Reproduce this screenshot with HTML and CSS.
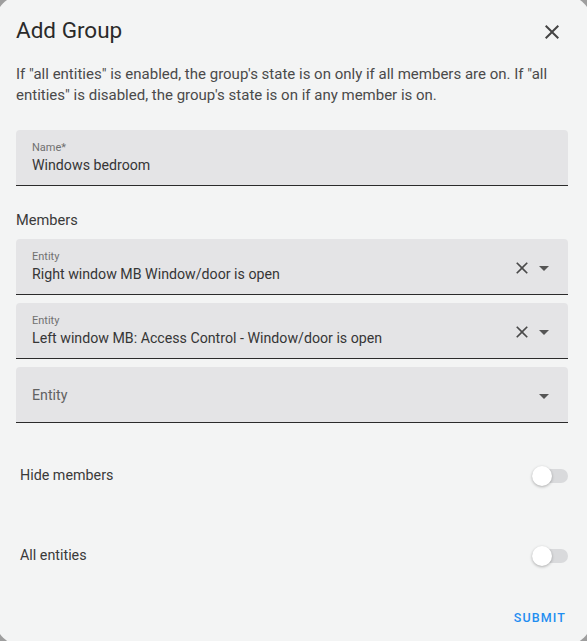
FILE: index.html
```html
<!DOCTYPE html>
<html lang="en">
<head>
    <meta charset="UTF-8">
    <meta name="viewport" content="width=device-width, initial-scale=1.0">
    <title>Add Group</title>
    <link rel="stylesheet" href="styles.css">
</head>
<body>
    <div class="dialog">
        <div class="dialog-header">
            <h2 class="dialog-title">Add Group</h2>
            <button class="icon-button close-button" aria-label="Close">
                <svg viewBox="0 0 24 24" width="24" height="24"><path d="M19 6.41L17.59 5 12 10.59 6.41 5 5 6.41 10.59 12 5 17.59 6.41 19 12 13.41 17.59 19 19 17.59 13.41 12z"/></svg>
            </button>
        </div>

        <div class="dialog-content">
            <p class="hint">If "all entities" is enabled, the group's state is on only if all members are on. If "all entities" is disabled, the group's state is on if any member is on.</p>

            <div class="field">
                <div class="field-text">
                    <div class="field-label">Name*</div>
                    <div class="field-value">Windows bedroom</div>
                </div>
            </div>

            <div class="section-label">Members</div>

            <div class="members">
                <div class="field">
                    <div class="field-text">
                        <div class="field-label">Entity</div>
                        <div class="field-value">Right window MB Window/door is open</div>
                    </div>
                    <div class="field-icons">
                        <svg class="clear-icon" viewBox="0 0 24 24" width="20" height="20"><path d="M19 6.41L17.59 5 12 10.59 6.41 5 5 6.41 10.59 12 5 17.59 6.41 19 12 13.41 17.59 19 19 17.59 13.41 12z"/></svg>
                        <svg class="caret-icon" viewBox="0 0 24 24" width="24" height="24"><path d="M7 10l5 5 5-5z"/></svg>
                    </div>
                </div>
                <div class="field">
                    <div class="field-text">
                        <div class="field-label">Entity</div>
                        <div class="field-value">Left window MB: Access Control - Window/door is open</div>
                    </div>
                    <div class="field-icons">
                        <svg class="clear-icon" viewBox="0 0 24 24" width="20" height="20"><path d="M19 6.41L17.59 5 12 10.59 6.41 5 5 6.41 10.59 12 5 17.59 6.41 19 12 13.41 17.59 19 19 17.59 13.41 12z"/></svg>
                        <svg class="caret-icon" viewBox="0 0 24 24" width="24" height="24"><path d="M7 10l5 5 5-5z"/></svg>
                    </div>
                </div>
                <div class="field field-empty">
                    <div class="field-text">
                        <div class="field-placeholder">Entity</div>
                    </div>
                    <div class="field-icons">
                        <svg class="caret-icon" viewBox="0 0 24 24" width="24" height="24"><path d="M7 10l5 5 5-5z"/></svg>
                    </div>
                </div>
            </div>

            <div class="toggle-row">
                <span class="toggle-label">Hide members</span>
                <span class="switch"><span class="switch-thumb"></span></span>
            </div>
            <div class="toggle-row">
                <span class="toggle-label">All entities</span>
                <span class="switch"><span class="switch-thumb"></span></span>
            </div>
        </div>

        <div class="dialog-actions">
            <button class="text-button">Submit</button>
        </div>
    </div>
</body>
</html>
```

FILE: styles.css
```css
body {
    font-family: Roboto, "Noto Sans", sans-serif;
    margin: 0;
    background-color: #9e9e9e;
    overflow: hidden;
    color: #212121;
}
.dialog {
    margin: -5px -5px 0 -5px;
    height: 651px;
    box-sizing: border-box;
    padding: 19px 24px 0 21px;
    background-color: #f3f4f4;
    border-radius: 28px;
    display: flex;
    flex-direction: column;
}
.dialog-header {
    display: flex;
    justify-content: space-between;
    align-items: flex-start;
}
.dialog-title {
    margin: 0;
    font-size: 22.5px;
    font-weight: 400;
    line-height: 32px;
    color: #2a2a2a;
}
.icon-button {
    border: none;
    background: none;
    padding: 0;
    cursor: pointer;
}
.close-button {
    width: 24px;
    height: 24px;
    margin-top: 6px;
    margin-right: 4px;
    fill: #444;
}
.close-button svg {
    display: block;
}
.dialog-content {
    display: flex;
    flex-direction: column;
}
.hint {
    margin: 18px 0 0 0;
    font-size: 15px;
    line-height: 21px;
    color: #4a4a4a;
}
.field {
    margin-top: 24px;
    height: 56px;
    box-sizing: border-box;
    display: flex;
    align-items: center;
    padding: 0 12px 0 16px;
    background-color: #e4e4e6;
    border-radius: 4px 4px 0 0;
    border-bottom: 1px solid #2b2b2b;
}
.field-text {
    flex: 1;
    align-self: flex-start;
    padding-top: 11px;
    min-width: 0;
}
.field-label {
    font-size: 11px;
    line-height: 14px;
    color: #707070;
}
.field-value {
    font-size: 14.2px;
    line-height: 20px;
    color: #363636;
    white-space: nowrap;
}
.field-empty .field-text {
    align-self: center;
    padding-top: 0;
}
.field-placeholder {
    font-size: 14.2px;
    line-height: 20px;
    color: #626262;
}
.field-icons {
    display: flex;
    align-items: center;
    padding-top: 3px;
}
.field-icons svg {
    display: block;
}
.clear-icon {
    fill: #4a4a4a;
}
.caret-icon {
    fill: #555;
}
.section-label {
    margin-top: 24px;
    font-size: 14.6px;
    line-height: 20px;
    color: #3a3a3a;
}
.members {
    display: flex;
    flex-direction: column;
    gap: 8px;
    margin-top: 9px;
}
.members .field {
    margin-top: 0;
}
.toggle-row {
    display: flex;
    align-items: center;
    justify-content: space-between;
    height: 56px;
    margin-top: 24px;
    padding-left: 4px;
}
.toggle-label {
    font-size: 14.3px;
    color: #3a3a3a;
}
.switch {
    position: relative;
    width: 36px;
    height: 14px;
    border-radius: 7px;
    background-color: #d9dadc;
    margin-top: 2px;
}
.switch-thumb {
    position: absolute;
    left: 0;
    top: -3px;
    width: 20px;
    height: 20px;
    border-radius: 50%;
    background-color: #fff;
    box-shadow: 0 1px 3px rgba(0, 0, 0, 0.3);
}
.dialog-actions {
    display: flex;
    justify-content: flex-end;
    margin-top: 16px;
}
.text-button {
    border: none;
    background: none;
    height: 36px;
    padding: 0 8px;
    margin-right: -6px;
    font-family: Roboto, sans-serif;
    font-size: 12.5px;
    font-weight: 500;
    letter-spacing: 1.1px;
    text-transform: uppercase;
    color: #1f8ef1;
    cursor: pointer;
}
```
